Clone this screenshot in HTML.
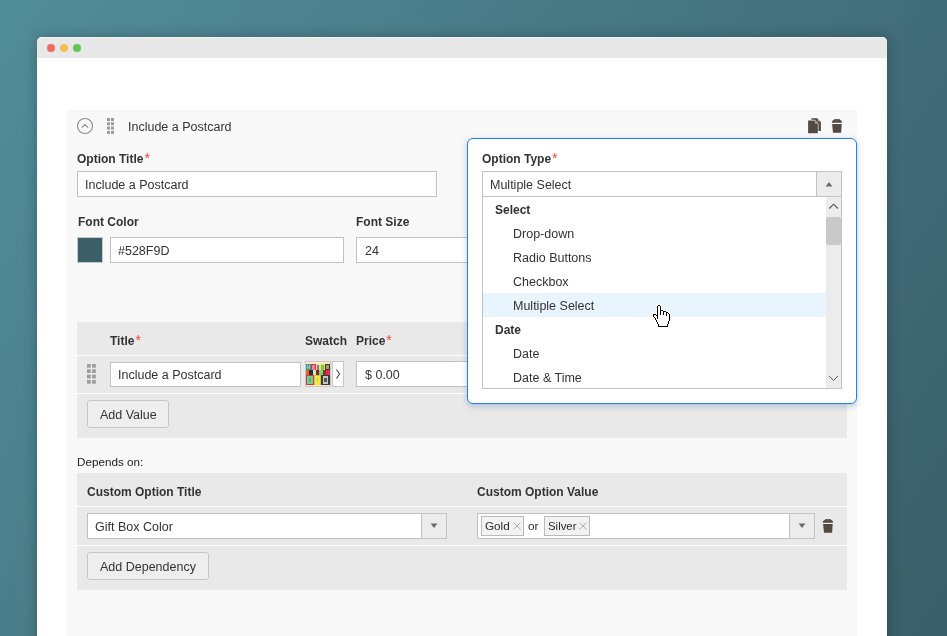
<!DOCTYPE html>
<html><head><meta charset="utf-8"><style>
html,body{margin:0;padding:0;}
body{width:947px;height:636px;overflow:hidden;position:relative;background:linear-gradient(125deg,#528d9a 0%,#395e68 100%);font-family:'Liberation Sans',sans-serif;}
body>div,body>svg{position:absolute;}
.t{white-space:nowrap;line-height:20px;will-change:transform;}
</style></head><body>
<div style="left:37px;top:37px;width:850px;height:640px;background:#fff;border-radius:5px 5px 0 0;box-shadow:0 0 14px rgba(0,0,0,0.25)"></div>
<div style="left:37px;top:37px;width:850px;height:21px;background:#e8e8e8;border-radius:5px 5px 0 0;box-shadow:inset 0 1px 0 rgba(255,255,255,.45)"></div>
<div style="left:47px;top:43.5px;width:8px;height:8px;border-radius:50%;background:#ed6a5e"></div>
<div style="left:60px;top:43.5px;width:8px;height:8px;border-radius:50%;background:#f5bf4f"></div>
<div style="left:73px;top:43.5px;width:8px;height:8px;border-radius:50%;background:#61c554"></div>
<div style="left:67px;top:110px;width:790px;height:540px;background:#f8f8f8"></div>
<svg style="left:76px;top:117px" width="18" height="18" viewBox="0 0 18 18"><circle cx="9" cy="9" r="7.5" fill="none" stroke="#8a8a8a" stroke-width="1.1"/><path d="M5.8 10.6 L9 7.6 L12.2 10.6" fill="none" stroke="#8a8a8a" stroke-width="1.1"/></svg>
<svg style="left:107px;top:118px" width="7" height="16" viewBox="0 0 7 16" fill="#9a9a9a"><rect x="0" y="0" width="3" height="3"/><rect x="0" y="4.3" width="3" height="3"/><rect x="0" y="8.6" width="3" height="3"/><rect x="0" y="12.9" width="3" height="3"/><rect x="4" y="0" width="3" height="3"/><rect x="4" y="4.3" width="3" height="3"/><rect x="4" y="8.6" width="3" height="3"/><rect x="4" y="12.9" width="3" height="3"/></svg>
<div class="t" style="left:128px;top:117px;font-size:12.5px;font-weight:400;color:#333333;">Include a Postcard</div>
<svg style="left:805px;top:115px" width="20" height="22" viewBox="0 0 20 22" fill="#514943"><path d="M6.4 3.3 H12.2 L15.9 6.9 V15.9 H6.4 Z"/><path d="M12.6 4.2 L15 6.5 H12.6 Z" fill="#b8b3ae"/><path d="M3.1 5.5 H9.4 L12.8 8.9 V18.2 H3.1 Z" stroke="#f8f8f8" stroke-width="1.3" paint-order="stroke fill"/><path d="M9.8 6.4 L12 8.5 H9.8 Z" fill="#b8b3ae"/></svg>
<svg style="left:831px;top:118px" width="12" height="16" viewBox="0 0 12 16" fill="#514943"><path d="M4 0.9 H8.2 L10.9 3.3 V4.8 H0.9 V3.3 Z"/><path d="M4.7 1.4 H7.5 V2.4 H4.7 Z" fill="#8a807a"/><path d="M1.1 5.9 H10.7 L10.1 14.8 H2 Z"/></svg>
<div class="t" style="left:77px;top:148px;font-size:12px;font-weight:700;color:#333333;">Option Title<span style="color:#e8473d;font-size:14px;font-weight:400;margin-left:1px">*</span></div>
<div style="left:77px;top:171px;width:360px;height:26px;background:#fff;border:1px solid #c2c2c2;box-sizing:border-box"></div>
<div class="t" style="left:85px;top:175px;font-size:12.5px;font-weight:400;color:#333333;">Include a Postcard</div>
<div class="t" style="left:77.5px;top:212px;font-size:12px;font-weight:700;color:#333333;">Font Color</div>
<div style="left:77px;top:237px;width:26px;height:26px;background:#3b5f66;border:1px solid #c8c8c8;box-sizing:border-box"></div>
<div style="left:110px;top:237px;width:234px;height:26px;background:#fff;border:1px solid #c2c2c2;box-sizing:border-box"></div>
<div class="t" style="left:118px;top:241px;font-size:12.5px;font-weight:400;color:#333333;">#528F9D</div>
<div class="t" style="left:356px;top:212px;font-size:12px;font-weight:700;color:#333333;">Font Size</div>
<div style="left:356px;top:237px;width:130px;height:26px;background:#fff;border:1px solid #c2c2c2;box-sizing:border-box"></div>
<div class="t" style="left:364.5px;top:241px;font-size:12.5px;font-weight:400;color:#333333;">24</div>
<div style="left:77px;top:322px;width:770px;height:33px;background:#e9e9e9"></div>
<div style="left:77px;top:355px;width:770px;height:1px;background:#fff"></div>
<div style="left:77px;top:356px;width:770px;height:37px;background:#e9e9e9"></div>
<div style="left:77px;top:393px;width:770px;height:1px;background:#fff"></div>
<div style="left:77px;top:394px;width:770px;height:44px;background:#e9e9e9"></div>
<div class="t" style="left:110px;top:330px;font-size:12px;font-weight:700;color:#333333;">Title<span style="color:#e8473d;font-size:14px;font-weight:400;margin-left:1px">*</span></div>
<div class="t" style="left:305px;top:331px;font-size:12px;font-weight:700;color:#333333;">Swatch</div>
<div class="t" style="left:356px;top:330px;font-size:12px;font-weight:700;color:#333333;">Price<span style="color:#e8473d;font-size:14px;font-weight:400;margin-left:1px">*</span></div>
<svg style="left:87px;top:364px" width="9" height="20" viewBox="0 0 9 20" fill="#9c9c9c"><rect x="0" y="0" width="3.7" height="3.7"/><rect x="0" y="5.3" width="3.7" height="3.7"/><rect x="0" y="10.7" width="3.7" height="3.7"/><rect x="0" y="16" width="3.7" height="3.7"/><rect x="5.1" y="0" width="3.7" height="3.7"/><rect x="5.1" y="5.3" width="3.7" height="3.7"/><rect x="5.1" y="10.7" width="3.7" height="3.7"/><rect x="5.1" y="16" width="3.7" height="3.7"/></svg>
<div style="left:110px;top:362px;width:191px;height:25px;background:#fff;border:1px solid #c2c2c2;box-sizing:border-box"></div>
<div class="t" style="left:118px;top:365px;font-size:12.5px;font-weight:400;color:#333333;">Include a Postcard</div>
<div style="left:305px;top:361px;width:26px;height:26px;border:1px solid #c8c8c8;box-sizing:border-box;background:#f6ecc8"></div>
<svg style="left:305px;top:361px" width="26" height="26" viewBox="0 0 26 26"><rect x="1" y="3" width="5" height="6" fill="#3b9b97"/><rect x="2" y="4" width="1" height="4" fill="#8fc8c0"/><rect x="4" y="4" width="1" height="4" fill="#8fc8c0"/><rect x="2" y="6" width="3" height="1" fill="#8fc8c0"/><rect x="6" y="3" width="5" height="6" fill="#d6334a"/><rect x="7" y="4" width="3" height="5" fill="#e88090"/><rect x="11" y="3" width="4" height="6" fill="#e9dcc0"/><rect x="12" y="4" width="2" height="5" fill="#9a7a50"/><rect x="15" y="3" width="5" height="6" fill="#f0e84a"/><rect x="16" y="4" width="3" height="5" fill="#6fc85a"/><rect x="20" y="3" width="5" height="6" fill="#3a3734"/><rect x="21" y="4" width="3" height="4" fill="#b09a70"/><rect x="1" y="9" width="3" height="5" fill="#e0662c"/><rect x="4" y="9" width="4" height="5" fill="#2e2e2e"/><rect x="8" y="9" width="3" height="5" fill="#cfe9b0"/><rect x="11" y="9" width="3" height="5" fill="#8a2030"/><rect x="14" y="9" width="4" height="5" fill="#7fd070"/><rect x="18" y="9" width="3" height="5" fill="#9a2a3a"/><rect x="21" y="9" width="4" height="5" fill="#d6334a"/><rect x="1" y="14" width="8" height="10" fill="#d6334a"/><rect x="2" y="15" width="6" height="8" fill="#5fd98a"/><rect x="4" y="17" width="2" height="4" fill="#9a8a7a"/><rect x="9" y="14" width="7" height="10" fill="#d8c050"/><rect x="10" y="15" width="5" height="9" fill="#f2ea40"/><rect x="12" y="17" width="1" height="3" fill="#c8b060"/><rect x="16" y="14" width="9" height="10" fill="#3a3a3a"/><rect x="18" y="15" width="5" height="8" fill="#c8c8c8"/><rect x="19" y="17" width="3" height="4" fill="#555"/></svg>
<div style="left:332px;top:361px;width:12px;height:26px;background:#fff;border:1px solid #c8c8c8;box-sizing:border-box"></div>
<svg style="left:335px;top:368px" width="6" height="12" viewBox="0 0 6 12"><path d="M1.5 1.5 L4.5 6 L1.5 10.5" fill="none" stroke="#444" stroke-width="1.1"/></svg>
<div style="left:356px;top:361px;width:130px;height:26px;background:#fff;border:1px solid #c2c2c2;box-sizing:border-box"></div>
<div class="t" style="left:364.5px;top:365px;font-size:12.5px;font-weight:400;color:#333333;">$ 0.00</div>
<div style="left:87px;top:400px;width:82px;height:28px;background:#eeeeee;border:1px solid #c6c6c6;border-radius:3px;box-sizing:border-box"></div>
<div class="t" style="left:99.5px;top:405px;font-size:12.5px;font-weight:400;color:#333333;">Add Value</div>
<div class="t" style="left:77.3px;top:452px;font-size:11.7px;font-weight:400;color:#222;">Depends on:</div>
<div style="left:77px;top:473px;width:770px;height:33px;background:#e9e9e9"></div>
<div style="left:77px;top:506px;width:770px;height:1px;background:#fff"></div>
<div style="left:77px;top:507px;width:770px;height:38px;background:#e9e9e9"></div>
<div style="left:77px;top:545px;width:770px;height:1px;background:#fff"></div>
<div style="left:77px;top:546px;width:770px;height:44px;background:#e9e9e9"></div>
<div class="t" style="left:87.4px;top:482px;font-size:12px;font-weight:700;color:#333333;">Custom Option Title</div>
<div class="t" style="left:477px;top:482px;font-size:12px;font-weight:700;color:#333333;">Custom Option Value</div>
<div style="left:87px;top:513px;width:360px;height:26px;background:#fff;border:1px solid #c2c2c2;box-sizing:border-box"></div>
<div style="left:421px;top:513px;width:26px;height:26px;background:#ececec;border:1px solid #c2c2c2;box-sizing:border-box"></div>
<svg style="left:430px;top:523px" width="8" height="6" viewBox="0 0 8 6"><path d="M0.6 0.6 H7.4 L4 5 Z" fill="#6a6a6a"/></svg>
<div class="t" style="left:95.4px;top:517px;font-size:12.5px;font-weight:400;color:#333333;">Gift Box Color</div>
<div style="left:477px;top:513px;width:338px;height:26px;background:#fff;border:1px solid #c2c2c2;box-sizing:border-box"></div>
<div style="left:789px;top:513px;width:26px;height:26px;background:#ececec;border:1px solid #c2c2c2;box-sizing:border-box"></div>
<svg style="left:798px;top:523px" width="8" height="6" viewBox="0 0 8 6"><path d="M0.6 0.6 H7.4 L4 5 Z" fill="#6a6a6a"/></svg>
<div style="left:481px;top:516px;width:43px;height:20px;background:#f2f2f2;border:1px solid #bababa;box-sizing:border-box"></div>
<div class="t" style="left:485px;top:515.5px;font-size:11.7px;font-weight:400;color:#2a2a2a;">Gold</div>
<svg style="left:513px;top:522px" width="8" height="8" viewBox="0 0 8 8"><path d="M0.5 0.5 L7.5 7.5 M7.5 0.5 L0.5 7.5" stroke="#a8a8a8" stroke-width="0.9"/></svg>
<div class="t" style="left:528px;top:516px;font-size:11.8px;font-weight:400;color:#2a2a2a;">or</div>
<div style="left:544px;top:516px;width:46px;height:20px;background:#f2f2f2;border:1px solid #bababa;box-sizing:border-box"></div>
<div class="t" style="left:548.3px;top:515.5px;font-size:11.4px;font-weight:400;color:#2a2a2a;">Silver</div>
<svg style="left:579px;top:522px" width="8" height="8" viewBox="0 0 8 8"><path d="M0.5 0.5 L7.5 7.5 M7.5 0.5 L0.5 7.5" stroke="#a8a8a8" stroke-width="0.9"/></svg>
<svg style="left:822px;top:518px" width="12" height="16" viewBox="0 0 12 16" fill="#514943"><path d="M4 0.9 H8.2 L10.9 3.3 V4.8 H0.9 V3.3 Z"/><path d="M4.7 1.4 H7.5 V2.4 H4.7 Z" fill="#8a807a"/><path d="M1.1 5.9 H10.7 L10.1 14.8 H2 Z"/></svg>
<div style="left:87px;top:552px;width:122px;height:28px;background:#eeeeee;border:1px solid #c6c6c6;border-radius:3px;box-sizing:border-box"></div>
<div class="t" style="left:100px;top:557px;font-size:12.5px;font-weight:400;color:#333333;">Add Dependency</div>
<div style="left:467px;top:138px;width:390px;height:266px;background:#fff;border:1px solid #2183df;border-radius:6px;box-sizing:border-box;box-shadow:0 2px 6px rgba(30,90,160,0.3)"></div>
<div class="t" style="left:482px;top:148px;font-size:12px;font-weight:700;color:#333333;">Option Type<span style="color:#e8473d;font-size:14px;font-weight:400;margin-left:1px">*</span></div>
<div style="left:482px;top:171px;width:360px;height:26px;background:#fff;border:1px solid #c2c2c2;box-sizing:border-box"></div>
<div style="left:816px;top:171px;width:26px;height:26px;background:#ececec;border:1px solid #c2c2c2;box-sizing:border-box"></div>
<svg style="left:825px;top:181px" width="8" height="6" viewBox="0 0 8 6"><path d="M0.6 5.4 H7.4 L4 1 Z" fill="#6a6a6a"/></svg>
<div class="t" style="left:490.3px;top:175px;font-size:12.5px;font-weight:400;color:#333333;">Multiple Select</div>
<div style="left:482px;top:197px;width:360px;height:192px;background:#fff;border:1px solid #c2c2c2;border-top:none;box-sizing:border-box"></div>
<div style="left:483px;top:293px;width:343px;height:24px;background:#e8f4fe"></div>
<div class="t" style="left:495px;top:200px;font-size:12px;font-weight:700;color:#333333;">Select</div>
<div class="t" style="left:512.5px;top:224px;font-size:12.5px;font-weight:400;color:#333333;">Drop-down</div>
<div class="t" style="left:512.5px;top:248px;font-size:12.5px;font-weight:400;color:#333333;">Radio Buttons</div>
<div class="t" style="left:512.5px;top:272px;font-size:12.5px;font-weight:400;color:#333333;">Checkbox</div>
<div class="t" style="left:512.5px;top:296px;font-size:12.5px;font-weight:400;color:#333333;">Multiple Select</div>
<div class="t" style="left:495px;top:320px;font-size:12px;font-weight:700;color:#333333;">Date</div>
<div class="t" style="left:512.5px;top:344px;font-size:12.5px;font-weight:400;color:#333333;">Date</div>
<div class="t" style="left:512.5px;top:368px;font-size:12.5px;font-weight:400;color:#333333;">Date &amp; Time</div>
<div style="left:826px;top:197px;width:15px;height:191px;background:#ececec"></div>
<div style="left:826px;top:217px;width:14.5px;height:28px;background:#c9c9c9;border-radius:2px"></div>
<svg style="left:828px;top:202px" width="11" height="8" viewBox="0 0 11 8"><path d="M1.3 6.5 L5.6 2.2 L9.9 6.5" fill="none" stroke="#555" stroke-width="1.1"/></svg>
<svg style="left:828px;top:374px" width="11" height="8" viewBox="0 0 11 8"><path d="M1 2 L5.5 6.5 L10 2" fill="none" stroke="#555" stroke-width="1"/></svg>
<svg style="left:651px;top:303px" width="22" height="26" viewBox="0 0 22 26" shape-rendering="crispEdges"><path d="M6 2 H10 V7 H12 V8 H15 V9 H17 V11 H18 V18 H17 V21 H16 V23 H7 V21 H6 V19 H5 V17 H4 V15 H3 V14 H2 V11 H5 V12 H6 Z" fill="#fff" stroke="#fff" stroke-width="1.5"/><g fill="#000"><rect x="6" y="12" width="1" height="1"/><rect x="18" y="17" width="1" height="1"/><rect x="6" y="15" width="1" height="1"/><rect x="7" y="23" width="1" height="1"/><rect x="12" y="10" width="1" height="1"/><rect x="4" y="15" width="1" height="1"/><rect x="9" y="5" width="1" height="1"/><rect x="9" y="8" width="1" height="1"/><rect x="9" y="11" width="1" height="1"/><rect x="17" y="18" width="1" height="1"/><rect x="2" y="11" width="1" height="1"/><rect x="13" y="8" width="1" height="1"/><rect x="11" y="23" width="1" height="1"/><rect x="15" y="11" width="1" height="1"/><rect x="9" y="23" width="1" height="1"/><rect x="6" y="5" width="1" height="1"/><rect x="6" y="11" width="1" height="1"/><rect x="13" y="23" width="1" height="1"/><rect x="6" y="8" width="1" height="1"/><rect x="18" y="16" width="1" height="1"/><rect x="6" y="14" width="1" height="1"/><rect x="18" y="13" width="1" height="1"/><rect x="6" y="20" width="1" height="1"/><rect x="12" y="9" width="1" height="1"/><rect x="18" y="11" width="1" height="1"/><rect x="16" y="22" width="1" height="1"/><rect x="7" y="22" width="1" height="1"/><rect x="15" y="23" width="1" height="1"/><rect x="8" y="2" width="1" height="1"/><rect x="4" y="11" width="1" height="1"/><rect x="9" y="7" width="1" height="1"/><rect x="5" y="12" width="1" height="1"/><rect x="5" y="18" width="1" height="1"/><rect x="9" y="4" width="1" height="1"/><rect x="9" y="10" width="1" height="1"/><rect x="11" y="7" width="1" height="1"/><rect x="17" y="20" width="1" height="1"/><rect x="8" y="23" width="1" height="1"/><rect x="16" y="9" width="1" height="1"/><rect x="10" y="23" width="1" height="1"/><rect x="6" y="4" width="1" height="1"/><rect x="2" y="13" width="1" height="1"/><rect x="15" y="10" width="1" height="1"/><rect x="6" y="7" width="1" height="1"/><rect x="6" y="13" width="1" height="1"/><rect x="18" y="12" width="1" height="1"/><rect x="6" y="10" width="1" height="1"/><rect x="16" y="21" width="1" height="1"/><rect x="18" y="15" width="1" height="1"/><rect x="7" y="21" width="1" height="1"/><rect x="12" y="11" width="1" height="1"/><rect x="6" y="19" width="1" height="1"/><rect x="12" y="8" width="1" height="1"/><rect x="3" y="11" width="1" height="1"/><rect x="14" y="8" width="1" height="1"/><rect x="3" y="14" width="1" height="1"/><rect x="4" y="16" width="1" height="1"/><rect x="12" y="23" width="1" height="1"/><rect x="9" y="3" width="1" height="1"/><rect x="9" y="9" width="1" height="1"/><rect x="15" y="12" width="1" height="1"/><rect x="17" y="10" width="1" height="1"/><rect x="9" y="6" width="1" height="1"/><rect x="14" y="23" width="1" height="1"/><rect x="5" y="17" width="1" height="1"/><rect x="10" y="7" width="1" height="1"/><rect x="17" y="19" width="1" height="1"/><rect x="16" y="23" width="1" height="1"/><rect x="2" y="12" width="1" height="1"/><rect x="7" y="2" width="1" height="1"/><rect x="15" y="9" width="1" height="1"/><rect x="6" y="6" width="1" height="1"/><rect x="6" y="3" width="1" height="1"/><rect x="6" y="9" width="1" height="1"/><rect x="18" y="14" width="1" height="1"/></g></svg>
</body></html>
